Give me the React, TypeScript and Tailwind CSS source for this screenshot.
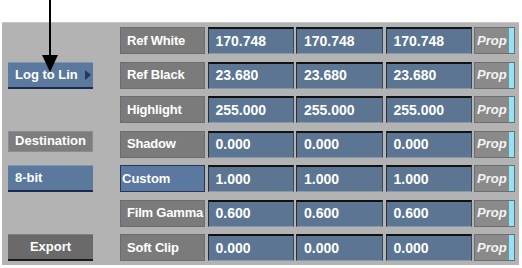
import React from 'react';

const rows = [
  { label: 'Ref White', values: ['170.748', '170.748', '170.748'] },
  { label: 'Ref Black', values: ['23.680', '23.680', '23.680'] },
  { label: 'Highlight', values: ['255.000', '255.000', '255.000'] },
  { label: 'Shadow', values: ['0.000', '0.000', '0.000'] },
  { label: 'Custom', values: ['1.000', '1.000', '1.000'], active: true },
  { label: 'Film Gamma', values: ['0.600', '0.600', '0.600'] },
  { label: 'Soft Clip', values: ['0.000', '0.000', '0.000'] },
];

const font = { fontFamily: '"Liberation Sans", Arial, sans-serif' };

export default function App() {
  return (
    <div className="relative w-[522px] h-[268px] bg-white" style={font}>
      <div className="absolute left-[2px] top-[22px] w-[517px] h-[243px] bg-[#b3b3b3] border-t border-[#c8c8c8] flex pl-[6px] pt-[4px] gap-[27px]">
        {/* left column */}
        <div className="grid grid-rows-[repeat(7,27px)] gap-y-[7.5px] w-[85px] text-white font-bold text-[13px] whitespace-nowrap">
          <div />
          <div className="flex items-center pl-[7px] bg-[#5b799c] border-b-2 border-[#1d2a4f] border-t border-t-[#7d97b5]">
            <span className="flex-1">Log to Lin</span>
            <span className="w-0 h-0 mr-[2px] border-y-[5px] border-y-transparent border-l-[6px] border-l-[#2a3560]" />
          </div>
          <div />
          <div className="h-[21px] flex items-center justify-center bg-[#7d7d7d] border border-[#8c8c8c]">Destination</div>
          <div className="flex items-center pl-[7px] bg-[#5b799c] border-b-2 border-[#1d2a4f] border-t border-t-[#7d97b5]">8-bit</div>
          <div />
          <div className="flex items-center justify-center bg-[#6a6a6a] border-b-2 border-[#1a1a1a] border-t border-t-[#808080]">Export</div>
        </div>

        {/* parameter grid */}
        <div className="grid grid-cols-[85px_86px_87px_86px_41px] grid-rows-[repeat(7,27px)] gap-y-[7.5px] gap-x-[2.5px] text-white font-bold whitespace-nowrap">
          {rows.map((r) => (
            <React.Fragment key={r.label}>
              {r.active ? (
                <div className="flex items-center pl-[1px] bg-[#5a78a0] border border-[#25365a] text-[13px]">{r.label}</div>
              ) : (
                <div className="flex items-center pl-[6px] bg-[#7b7b7b] border border-[#6c6c6c] text-[13px] tracking-[-0.2px]">{r.label}</div>
              )}
              {r.values.map((v, i) => (
                <div key={i} className="flex items-center pl-[7px] bg-[#5b7592] border-t-2 border-l border-t-[#111] border-l-[#2a2f36] border-r border-b border-r-[#3c4a58] border-b-[#8898a8] text-[14px]">
                  {v}
                </div>
              ))}
              <div className="flex bg-[#8a8a8a] border border-[#6e6e6e]">
                <span className="flex-1 flex items-center pl-[2px] italic font-bold text-[13px] text-[#f4f4f4]">Prop</span>
                <span className="w-[5px] bg-[#8fe4f7]" />
              </div>
            </React.Fragment>
          ))}
        </div>
      </div>

      {/* pointer arrow */}
      <svg className="absolute left-[40px] top-0" width="22" height="74" viewBox="0 0 22 74">
        <line x1="10" y1="0" x2="10" y2="58" stroke="#000" strokeWidth="2" />
        <polygon points="2,55 18,55 10,72" fill="#000" />
      </svg>
    </div>
  );
}
